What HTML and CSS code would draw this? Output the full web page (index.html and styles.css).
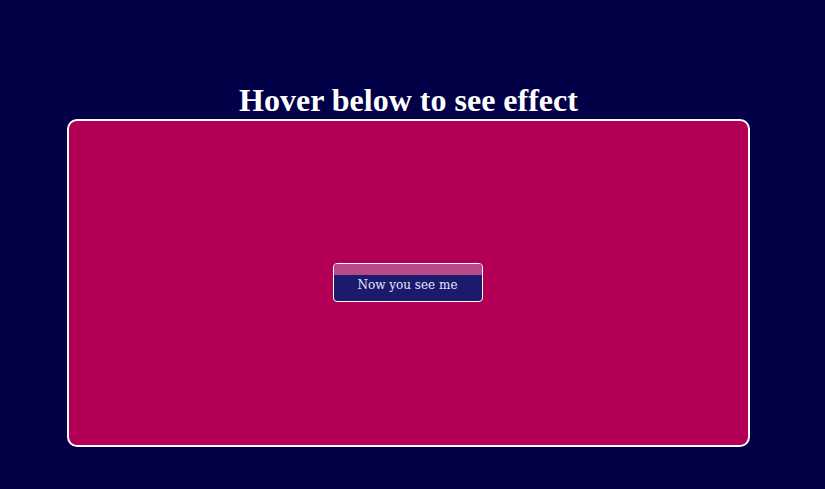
FILE: index.html
```html
<!DOCTYPE html>
<html>
<head>
<meta charset="utf-8">
<link rel="stylesheet" href="styles.css">
</head>
<body>
<main class="page">
  <h1 class="title">Hover below to see effect</h1>
  <section class="stage">
    <button class="reveal-btn">
      <span class="reveal-top"></span>
      <span class="reveal-label">Now you see me</span>
    </button>
  </section>
</main>
</body>
</html>
```
FILE: styles.css
```css
html, body {
  margin: 0;
  padding: 0;
  background: #020046;
}
.page {
  display: flex;
  flex-direction: column;
  align-items: flex-start;
  padding: 82px 0 0 67px;
}
.title {
  margin: 0 0 1px 0;
  width: 683px;
  text-align: center;
  font-family: "Liberation Serif", serif;
  font-size: 32px;
  font-weight: bold;
  line-height: 36px;
  color: #ffffff;
}
.stage {
  box-sizing: border-box;
  width: 683px;
  height: 328px;
  border: 2px solid #ffffff;
  border-radius: 10px;
  background: #b30056;
  display: flex;
  align-items: center;
  justify-content: center;
}
.reveal-btn {
  box-sizing: border-box;
  width: 150px;
  height: 39px;
  margin: 0 2px 1px 0;
  padding: 0;
  border: 1px solid #ffffff;
  border-radius: 4px;
  background: #1b1a6c;
  overflow: hidden;
  display: flex;
  flex-direction: column;
  cursor: pointer;
}
.reveal-top {
  display: block;
  width: 100%;
  height: 11px;
  background: #b94a88;
}
.reveal-label {
  display: block;
  width: 100%;
  text-align: center;
  font-family: "DejaVu Serif", serif;
  font-size: 12px;
  line-height: 17px;
  color: #e2e8ff;
  padding-top: 2px;
}
```
